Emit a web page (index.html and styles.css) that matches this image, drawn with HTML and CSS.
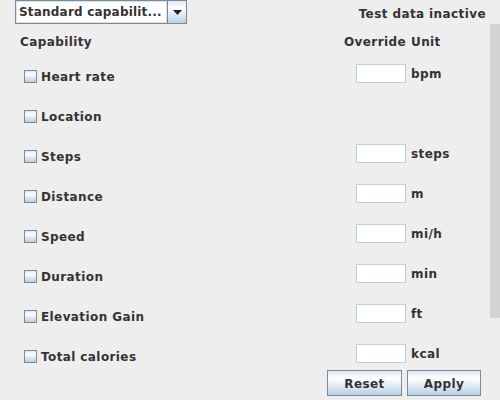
FILE: index.html
```html
<!DOCTYPE html>
<html>
<head>
<meta charset="utf-8">
<link rel="stylesheet" href="styles.css">
</head>
<body>
<div class="top">
  <div class="combo">
    <div class="combo-text">Standard capabilit...</div>
    <div class="combo-btn"><svg width="9" height="5" viewBox="0 0 9 5"><path d="M0 0H9L4.5 5Z" fill="#222"/></svg></div>
  </div>
  <div class="status">Test data inactive</div>
</div>
<div class="body">
  <div class="panel">
    <div class="head">
      <span class="h-cap">Capability</span>
      <span class="h-over">Override</span>
      <span class="h-unit">Unit</span>
    </div>
    <div class="rows">
      <label class="cap"><span class="box"></span>Heart rate</label><span class="field"></span><span class="unit">bpm</span>
      <label class="cap"><span class="box"></span>Location</label><span></span><span></span>
      <label class="cap"><span class="box"></span>Steps</label><span class="field"></span><span class="unit">steps</span>
      <label class="cap"><span class="box"></span>Distance</label><span class="field"></span><span class="unit">m</span>
      <label class="cap"><span class="box"></span>Speed</label><span class="field"></span><span class="unit">mi/h</span>
      <label class="cap"><span class="box"></span>Duration</label><span class="field"></span><span class="unit">min</span>
      <label class="cap"><span class="box"></span>Elevation Gain</label><span class="field"></span><span class="unit">ft</span>
      <label class="cap"><span class="box"></span>Total calories</label><span class="field"></span><span class="unit">kcal</span>
    </div>
    <div class="buttons">
      <button class="btn reset">Reset</button>
      <button class="btn apply">Apply</button>
    </div>
  </div>
  <div class="scroll"><div class="thumb"></div></div>
</div>
</body>
</html>
```
FILE: styles.css
```css
html, body {
  margin: 0;
  padding: 0;
  background: #eeeeee;
}
body {
  width: 500px;
  height: 400px;
  overflow: hidden;
  font-family: "DejaVu Sans", "Liberation Sans", sans-serif;
  font-weight: bold;
  font-size: 12px;
  letter-spacing: 0.4px;
  color: #333333;
}
.top {
  height: 24px;
  display: flex;
  align-items: center;
  justify-content: space-between;
  padding: 0 14px 0 15px;
}
.combo {
  width: 172px;
  height: 24px;
  box-sizing: border-box;
  border: 1px solid #7a8a99;
  display: flex;
}
.combo-text {
  flex: 1;
  background: #ffffff;
  border: 1px solid #d6e2ee;
  padding-left: 2px;
  line-height: 21px;
  white-space: nowrap;
  overflow: hidden;
  letter-spacing: 0.2px;
}
.combo-btn {
  width: 18px;
  border-left: 1px solid #7a8a99;
  background: linear-gradient(#dde8f3 0%, #ffffff 30%, #b8cfe5 100%);
  display: flex;
  align-items: center;
  justify-content: center;
}
.status {
  padding-top: 4px;
}
.body {
  display: flex;
}
.panel {
  width: 466px;
  padding-left: 20px;
  padding-right: 4px;
}
.head {
  display: flex;
  height: 24px;
  align-items: center;
  margin-top: 6px;
  margin-bottom: 10px;
}
.h-cap {
  flex: 1;
}
.h-over {
  margin-right: 5px;
}
.h-unit {
  width: 75px;
}
.rows {
  display: grid;
  grid-template-columns: 331px 50px 1fr;
  grid-auto-rows: 24px;
  column-gap: 5px;
  row-gap: 16px;
}
.cap {
  display: flex;
  align-items: center;
  padding-left: 4px;
  padding-top: 1px;
}
.box {
  width: 13px;
  height: 13px;
  box-sizing: border-box;
  border: 1px solid #7a8a99;
  background: linear-gradient(#dde8f3 0%, #ffffff 30%, #b8cfe5 100%);
  margin-right: 4px;
}
.field {
  height: 19px;
  box-sizing: border-box;
  border: 1px solid #b8cfe5;
  background: #ffffff;
}
.unit {
  line-height: 19px;
  padding-top: 1px;
}
.buttons {
  display: flex;
  justify-content: flex-end;
  gap: 5px;
  margin-top: 2px;
  padding-right: 5px;
}
.btn {
  height: 26px;
  box-sizing: border-box;
  border: 1px solid #7a8a99;
  border-radius: 0;
  background: linear-gradient(#dde8f3 0%, #ffffff 30%, #b8cfe5 100%);
  font: inherit;
  letter-spacing: 0.4px;
  color: #333333;
  padding: 2px 0 0 0;
}
.reset { width: 75px; }
.apply { width: 74px; }
.scroll {
  width: 10px;
}
.thumb {
  height: 294px;
  background: #d4d4d4;
}
```
